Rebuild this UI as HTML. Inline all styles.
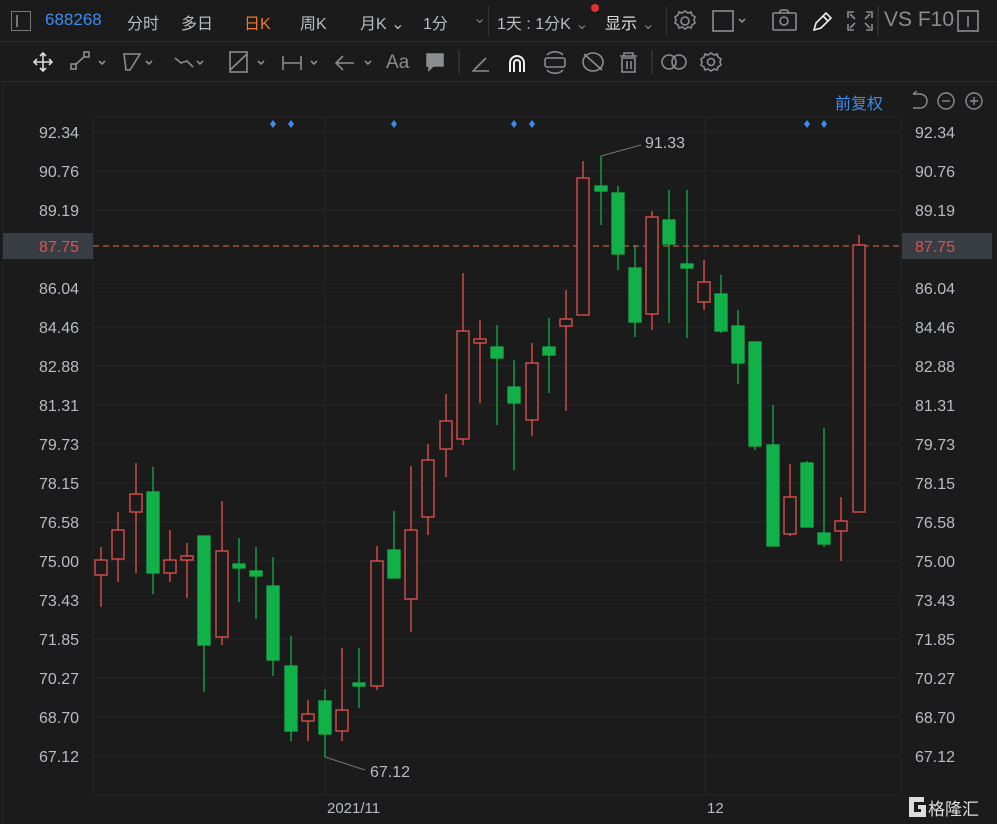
<!DOCTYPE html>
<html><head><meta charset="utf-8"><style>
*{margin:0;padding:0;box-sizing:border-box}
body{width:997px;height:824px;background:#1b1b1c;overflow:hidden;font-family:"Liberation Sans","Noto Sans CJK SC",sans-serif;position:relative;color:#b9bcc2}
.t{position:absolute;font-size:16px;white-space:nowrap}
</style></head><body>
<div style="position:absolute;left:0;top:0;width:997px;height:42px;border-bottom:1px solid #2a2a2c"></div>
<div style="position:absolute;left:0;top:42px;width:997px;height:40px;border-bottom:1px solid #2a2a2c"></div>
<div style="position:absolute;left:11px;top:11px;width:20px;height:20px;border:1.5px solid #777"></div>
<div style="position:absolute;left:16px;top:15px;width:1.5px;height:12px;background:#777"></div>
<div class="t" style="left:45px;top:10px;color:#3d8ce8;font-size:17px">688268</div>
<div class="t" style="left:127px;top:10px">分时</div>
<div class="t" style="left:181px;top:10px">多日</div>
<div class="t" style="left:244px;top:10px;color:#ee7a2c">日K</div>
<div class="t" style="left:300px;top:10px">周K</div>
<div class="t" style="left:360px;top:10px">月K ⌄</div>
<div class="t" style="left:423px;top:10px">1分</div>
<div class="t" style="left:473px;top:8px;color:#777">⌄</div>
<div style="position:absolute;left:488px;top:6px;width:1px;height:30px;background:#333"></div>
<div class="t" style="left:497px;top:10px">1天 : 1分K <span style="color:#777">⌄</span></div>
<div style="position:absolute;left:591px;top:4px;width:8px;height:8px;border-radius:50%;background:#d33"></div>
<div class="t" style="left:605px;top:10px;color:#ddd">显示 <span style="color:#777">⌄</span></div>
<div style="position:absolute;left:666px;top:6px;width:1px;height:30px;background:#333"></div>
<svg style="position:absolute;left:0;top:0" width="997" height="82" fill="none" stroke="#8a8c90" stroke-width="1.6">
<circle cx="685" cy="21" r="4"/><path d="M685 11l3 2 3-1 1 3 3 2-1 3 1 3-3 2-1 3-3-1-3 2-3-2-3 1-1-3-3-2 1-3-1-3 3-2 1-3 3 1z"/>
<rect x="713" y="11" width="20" height="20"/><path d="M739 19l3 3 3-3"/>
<rect x="773" y="13" width="23" height="17" rx="1"/><circle cx="784" cy="21" r="4"/><path d="M779 13l2-3h6l2 3"/>
<path stroke="#eee" d="M814 30l2-7 10-10 5 5-10 10z M823 16l5 5"/>
<path d="M848 18v-6h6 M866 12h6v6 M872 24v6h-6 M854 30h-6v-6 M850 14l5 5 M870 14l-5 5 M850 28l5-5 M870 28l-5-5"/>
<line x1="878" y1="6" x2="878" y2="36" stroke="#333"/>
<rect x="958" y="11" width="20" height="20"/><line x1="968" y1="16" x2="968" y2="27"/>
<path stroke="#ddd" d="M43 53v18 M34 62h18 M40 56l3-3 3 3 M40 68l3 3 3-3 M37 59l-3 3 3 3 M49 59l3 3-3 3"/>
<rect x="71" y="64" width="5" height="5"/><rect x="84" y="52" width="5" height="5"/><path d="M75 65l10-9 M99 61l3 3 3-3"/>
<path d="M126 70l-2-16h16l-10 16z M146 61l3 3 3-3"/>
<path d="M175 58l6 5 6-2 6 6 M197 61l3 3 3-3"/>
<rect x="230" y="52" width="17" height="20"/><path d="M230 70l17-16 M258 61l3 3 3-3"/>
<path d="M283 56v14 M283 63h18 M301 56v14 M311 61l3 3 3-3"/>
<path d="M336 63h18 M343 56l-7 7 7 7 M365 61l3 3 3-3"/>
<path d="M427 54h16v12h-10l-4 4v-4h-2z" fill="#8a8c90"/>
<line x1="459" y1="50" x2="459" y2="74" stroke="#333"/>
<path d="M472 71h17 M474 70l12-12"/>
<path stroke="#eee" stroke-width="2" d="M510 72v-9a7 7 0 0 1 14 0v9 M514 72v-9a3 3 0 0 1 6 0v9"/>
<rect x="545" y="58" width="20" height="9" rx="2"/><path d="M547 55a10 8 0 0 1 16 0 M547 70a10 8 0 0 0 16 0"/>
<ellipse cx="593" cy="62" rx="10" ry="9"/><path d="M584 54l18 16"/>
<path d="M620 56h17 M624 56v-3h9v3 M622 58h13v14h-13z M627 61v8 M631 61v8"/>
<line x1="652" y1="50" x2="652" y2="74" stroke="#333"/>
<circle cx="669" cy="62" r="7"/><circle cx="679" cy="62" r="7"/>
<circle cx="711" cy="62" r="3.5"/><path d="M711 53l3 2 3-1 1 3 3 2-1 3 1 3-3 2-1 3-3-1-3 2-3-2-3 1-1-3-3-2 1-3-1-3 3-2 1-3 3 1z"/>
</svg>
<div class="t" style="left:121px;top:52px;color:#999;font-size:16px;display:none"></div>
<div class="t" style="left:386px;top:52px;color:#8a8c90;font-size:19px">Aa</div>
<div class="t" style="left:884px;top:8px;color:#8a8c90;font-size:21px">VS F10</div>
<div class="t" style="left:835px;top:90px;color:#3d8ce8">前复权</div>
<svg style="position:absolute;left:905px;top:88px" width="92" height="26" fill="none" stroke="#8a8c90" stroke-width="1.4">
<path d="M8 6h7a7 7 0 0 1 0 14h-7 M8 6l4-3"/><circle cx="41" cy="13" r="8"/><path d="M37 13h8"/><circle cx="69" cy="13" r="8"/><path d="M65 13h8M69 9v8"/>
</svg>
<svg style="position:absolute;left:0;top:0" width="997" height="824" font-family="Liberation Sans" font-size="16">
<g stroke="#262628" stroke-width="1">
<line x1="93" y1="117" x2="93" y2="795"/><line x1="901" y1="117" x2="901" y2="795"/><line x1="93" y1="795" x2="901" y2="795"/><line x1="93" y1="117" x2="901" y2="117"/>
<line x1="325" y1="117" x2="325" y2="795"/><line x1="705" y1="117" x2="705" y2="795"/>
<g id="h"><line x1="93" y1="132" x2="901" y2="132"/><line x1="93" y1="171" x2="901" y2="171"/><line x1="93" y1="210" x2="901" y2="210"/><line x1="93" y1="288" x2="901" y2="288"/><line x1="93" y1="327" x2="901" y2="327"/><line x1="93" y1="366" x2="901" y2="366"/><line x1="93" y1="405" x2="901" y2="405"/><line x1="93" y1="444" x2="901" y2="444"/><line x1="93" y1="483" x2="901" y2="483"/><line x1="93" y1="522" x2="901" y2="522"/><line x1="93" y1="561" x2="901" y2="561"/><line x1="93" y1="600" x2="901" y2="600"/><line x1="93" y1="639" x2="901" y2="639"/><line x1="93" y1="678" x2="901" y2="678"/><line x1="93" y1="717" x2="901" y2="717"/><line x1="93" y1="756" x2="901" y2="756"/></g>
<line x1="3" y1="82" x2="3" y2="824"/>
</g>
<rect x="3" y="233" width="90" height="26" fill="#383d44"/><rect x="902" y="233" width="90" height="26" fill="#383d44"/>
<line x1="93" y1="246" x2="901" y2="246" stroke="#e0703a" stroke-dasharray="6,4"/>
<g fill="#b9bcc2" text-anchor="end">
<text x="79" y="138">92.34</text><text x="79" y="177">90.76</text><text x="79" y="216">89.19</text><text x="79" y="252" fill="#e05050">87.75</text><text x="79" y="294">86.04</text><text x="79" y="333">84.46</text><text x="79" y="372">82.88</text><text x="79" y="411">81.31</text><text x="79" y="450">79.73</text><text x="79" y="489">78.15</text><text x="79" y="528">76.58</text><text x="79" y="567">75.00</text><text x="79" y="606">73.43</text><text x="79" y="645">71.85</text><text x="79" y="684">70.27</text><text x="79" y="723">68.70</text><text x="79" y="762">67.12</text>
</g>
<g fill="#b9bcc2">
<text x="915" y="138">92.34</text><text x="915" y="177">90.76</text><text x="915" y="216">89.19</text><text x="915" y="252" fill="#e05050">87.75</text><text x="915" y="294">86.04</text><text x="915" y="333">84.46</text><text x="915" y="372">82.88</text><text x="915" y="411">81.31</text><text x="915" y="450">79.73</text><text x="915" y="489">78.15</text><text x="915" y="528">76.58</text><text x="915" y="567">75.00</text><text x="915" y="606">73.43</text><text x="915" y="645">71.85</text><text x="915" y="684">70.27</text><text x="915" y="723">68.70</text><text x="915" y="762">67.12</text>
<text x="645" y="148">91.33</text><text x="370" y="777">67.12</text>
<text x="327" y="813" font-size="15">2021/11</text><text x="707" y="813" font-size="15">12</text>
</g>
<path d="M601 156L641 145M325 757L365 770" stroke="#777" fill="none"/>
<g fill="#3d8ce8"><path d="M273 120l3 4-3 4-3-4z M291 120l3 4-3 4-3-4z M394 120l3 4-3 4-3-4z M514 120l3 4-3 4-3-4z M532 120l3 4-3 4-3-4z M807 120l3 4-3 4-3-4z M824 120l3 4-3 4-3-4z"/></g>
<g stroke="#e8524a" fill="#1b1b1c" stroke-width="1.3">
<path d="M101 547v60M118 512v70M136 463v110M170 530v52M187 543v55M222 501v144M308 700v41M342 648v93M377 546v144M411 466v166M428 444v91M446 394v83M463 273v172M480 320v83M532 343v93M566 290v121M583 161v154M652 211v119M704 260v50M790 464v72M841 497v64M859 235v277"/>
<rect x="95" y="560" width="12" height="15"/><rect x="112" y="530" width="12" height="29"/><rect x="130" y="494" width="12" height="18"/><rect x="164" y="560" width="12" height="13"/><rect x="181" y="556" width="12" height="4"/><rect x="216" y="551" width="12" height="86"/><rect x="302" y="714" width="12" height="7"/><rect x="336" y="710" width="12" height="21"/><rect x="371" y="561" width="12" height="125"/><rect x="405" y="530" width="12" height="69"/><rect x="422" y="460" width="12" height="57"/><rect x="440" y="421" width="12" height="28"/><rect x="457" y="331" width="12" height="108"/><rect x="474" y="339" width="12" height="4"/><rect x="526" y="363" width="12" height="57"/><rect x="560" y="319" width="12" height="7"/><rect x="577" y="178" width="12" height="137"/><rect x="646" y="217" width="12" height="97"/><rect x="698" y="282" width="12" height="20"/><rect x="784" y="497" width="12" height="37"/><rect x="835" y="521" width="12" height="10"/><rect x="853" y="245" width="12" height="267"/>
</g>
<g stroke="#12b048" fill="#12b048" stroke-width="1.3">
<path d="M153 467v127M204 536v156M239 538v64M256 547v72M273 557v119M291 636v105M325 689v68M359 648v60M394 511v67M497 325v100M514 360v110M549 318v75M601 156v69M618 186v84M635 245v92M669 190v133M687 190v148M721 275v58M738 310v74M755 342v108M773 405v141M807 461v66M824 428v119"/>
<rect x="147" y="492" width="12" height="81"/><rect x="198" y="536" width="12" height="109"/><rect x="233" y="564" width="12" height="4"/><rect x="250" y="571" width="12" height="5"/><rect x="267" y="586" width="12" height="74"/><rect x="285" y="666" width="12" height="65"/><rect x="319" y="701" width="12" height="33"/><rect x="353" y="683" width="12" height="3"/><rect x="388" y="550" width="12" height="28"/><rect x="491" y="347" width="12" height="11"/><rect x="508" y="387" width="12" height="16"/><rect x="543" y="347" width="12" height="8"/><rect x="595" y="186" width="12" height="5"/><rect x="612" y="193" width="12" height="61"/><rect x="629" y="268" width="12" height="54"/><rect x="663" y="220" width="12" height="24"/><rect x="681" y="264" width="12" height="4"/><rect x="715" y="294" width="12" height="37"/><rect x="732" y="326" width="12" height="37"/><rect x="749" y="342" width="12" height="104"/><rect x="767" y="445" width="12" height="101"/><rect x="801" y="463" width="12" height="64"/><rect x="818" y="533" width="12" height="11"/>
</g>
<g fill="#ddd"><path d="M909 797h15v5h-10v10h7v-3h-3v-4h8v12h-17z"/></g>
<text x="928" y="815" fill="#ddd" font-family="Noto Sans CJK SC" font-size="17">格隆汇</text>
</svg>
</body></html>
